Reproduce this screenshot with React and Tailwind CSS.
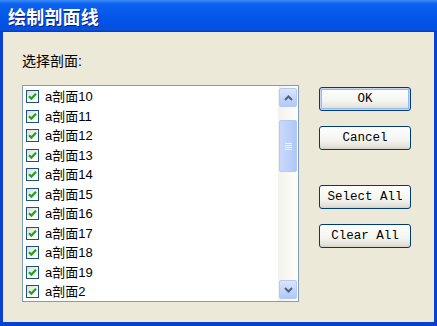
import React from "react";

const items = ["10", "11", "12", "13", "14", "15", "16", "17", "18", "19", "2"];

function CheckBox() {
  return (
    <div className="w-[13px] h-[13px] border border-[#1c5180] bg-[linear-gradient(135deg,#dcdcd7_0%,#ffffff_80%)] flex items-center justify-center shrink-0">
      <svg width="11" height="11" viewBox="0 0 11 11">
        <path d="M2 5.2 L4.4 7.6 L9 2.8" fill="none" stroke="#21a121" strokeWidth="2.2" />
      </svg>
    </div>
  );
}

function XpButton({ children, isDefault }) {
  return (
    <button
      className={
        "w-[92px] h-[24px] rounded-[3px] border border-[#003c74] bg-[linear-gradient(to_bottom,#ffffff_0%,#f4f4f0_60%,#e3e1d8_90%,#d6d0c5_100%)] text-[12.5px] text-black flex items-center justify-center " +
        (isDefault ? "shadow-[inset_0_0_0_1px_#c6d6f4,inset_0_0_0_2px_#97b7f1]" : "")
      }
      style={{ fontFamily: '"Liberation Mono", "DejaVu Sans Mono", monospace' }}
    >
      {children}
    </button>
  );
}

function ScrollBtn({ up }) {
  return (
    <div className="h-[19px] rounded-[2px] border border-[#b4c8f6] bg-[linear-gradient(to_bottom,#dbe6fe_0%,#c1d3fb_60%,#b3c8f6_100%)] flex items-center justify-center">
      <svg width="9" height="6" viewBox="0 0 9 6">
        <path d={up ? "M1 5 L4.5 1.5 L8 5" : "M1 1 L4.5 4.5 L8 1"} fill="none" stroke="#4d6185" strokeWidth="2" />
      </svg>
    </div>
  );
}

export default function App() {
  return (
    <div className="w-[437px] h-[326px] bg-[#0841d0] flex flex-col overflow-hidden">
      <div className="h-[32px] shrink-0 bg-[linear-gradient(to_bottom,#3a8cf9_0%,#0d62ef_12%,#0457e9_50%,#0250e2_85%,#0a50dc_92%,#003cc6_100%)] flex items-center pl-[8px]">
        <span
          className="text-white font-bold text-[18px] tracking-[0.2px] [text-shadow:1px_1px_0_#0a1e8a]"
          style={{ fontFamily: '"Noto Sans CJK SC", "Liberation Sans", sans-serif' }}
        >
          绘制剖面线
        </span>
      </div>
      <div
        className="flex-1 mx-[3px] mb-[4px] bg-[#ece9d8] flex pl-[19px] pt-[21px] items-start"
        style={{ fontFamily: '"Liberation Sans", "Noto Sans CJK SC", sans-serif' }}
      >
        <div className="flex flex-col">
          <div className="h-[16px] leading-[16px] text-[14px] text-black">选择剖面:</div>
          <div className="mt-[16px] w-[277px] h-[217px] border border-[#7f9db9] bg-white flex">
            <div className="flex-1 overflow-hidden pt-[1px]">
              {items.map((n) => (
                <div key={n} className="h-[19.5px] flex items-center pl-[3px] gap-[6px]">
                  <CheckBox />
                  <span className="text-[13px] text-black leading-none">a剖面{n}</span>
                </div>
              ))}
            </div>
            <div className="w-[20px] bg-[linear-gradient(to_right,#f3f1ec_0%,#fefefb_100%)] flex flex-col px-[1px] py-[2px]">
              <ScrollBtn up />
              <div className="flex-1 flex flex-col">
                <div className="h-[13px]" />
                <div className="h-[52px] rounded-[2px] border border-[#b4c8f6] bg-[linear-gradient(to_right,#c9d8fc_0%,#bed1fb_50%,#b0c6f6_100%)] flex flex-col items-center justify-center gap-[1px]">
                  <div className="w-[7px] h-[1px] bg-[#eef3fe]" />
                  <div className="w-[7px] h-[1px] bg-[#eef3fe]" />
                  <div className="w-[7px] h-[1px] bg-[#eef3fe]" />
                  <div className="w-[7px] h-[1px] bg-[#eef3fe]" />
                </div>
              </div>
              <ScrollBtn />
            </div>
          </div>
        </div>
        <div className="ml-[20px] mt-[34px] flex flex-col">
          <XpButton isDefault>OK</XpButton>
          <div className="h-[15px]" />
          <XpButton>Cancel</XpButton>
          <div className="h-[35px]" />
          <XpButton>Select All</XpButton>
          <div className="h-[15px]" />
          <XpButton>Clear All</XpButton>
        </div>
      </div>
    </div>
  );
}
